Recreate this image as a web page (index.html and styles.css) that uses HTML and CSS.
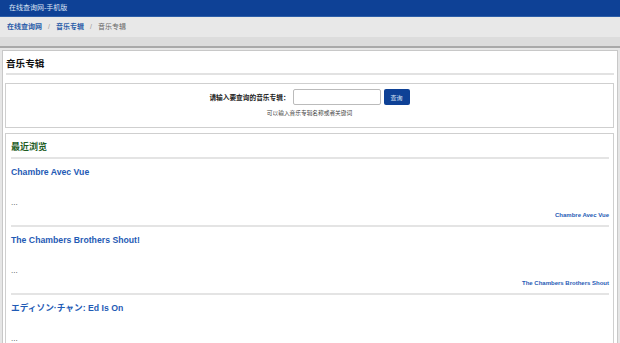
FILE: index.html
```html
<!DOCTYPE html>
<html>
  <head>
    <title>音乐专辑 - 在线查询网</title>
    <meta charset="utf-8" />
    <meta name="viewport" content="width=device-width" />
    <link rel="stylesheet" href="styles.css">
  </head>
  <body>
    <div class="top">在线查询网-手机版</div>
    <div class="crumbs">
      <a href="#">在线查询网</a><span class="sep">/</span><a href="#">音乐专辑</a><span class="sep">/</span><span class="here">音乐专辑</span>
    </div>
    <div class="bar"></div>

    <div class="main">
      <h1>音乐专辑</h1>

      <form class="box search">
        <div class="row">
          <label for="q">请输入要查询的音乐专辑：</label>
          <input id="q" type="text" />
          <button type="button">查询</button>
        </div>
        <p class="hint">可以输入音乐专辑名称或者关键词</p>
      </form>

      <div class="box recent">
        <h2>最近浏览</h2>
        <div class="item">
          <a class="title" href="#">Chambre Avec Vue</a>
          <p class="desc">...</p>
          <a class="more" href="#">Chambre Avec Vue</a>
        </div>
        <div class="item">
          <a class="title" href="#">The Chambers Brothers Shout!</a>
          <p class="desc">...</p>
          <a class="more" href="#">The Chambers Brothers Shout</a>
        </div>
        <div class="item">
          <a class="title" href="#">エディソン·チャン: Ed Is On</a>
          <p class="desc">...</p>
          <a class="more" href="#">Ed Is On</a>
        </div>
      </div>
    </div>
  </body>
</html>
```

FILE: styles.css
```css
body {
  margin: 0;
  background: #e6e6e6;
}

body,
* {
  font-family: "Liberation Sans", Arial, "Noto Sans CJK SC", sans-serif;
}

a {
  text-decoration: none;
  color: #1f5bb5;
}

.top {
  height: 16px;
  line-height: 16px;
  padding-left: 9px;
  background: #0e4196;
  border-bottom: 1px solid #2c5ea8;
  color: #dce4f3;
  font-size: 7px;
}

.crumbs {
  height: 20px;
  line-height: 20px;
  padding-left: 7px;
  background: #e8e8e8;
  font-size: 7px;
}

.crumbs a {
  font-weight: bold;
  color: #2a5ca8;
}

.crumbs .sep {
  color: #999;
  margin: 0 6px;
}

.crumbs .here {
  color: #666;
}

.bar {
  height: 9px;
  background: #dcdcdc;
  border-bottom: 2px solid #a9a9a9;
}

.main {
  margin: 2px 2px 0;
  padding: 4px 3px 20px 2px;
  background: #fff;
  border: 1px solid #c8c8c8;
}

h1 {
  margin: 0 0 0 1px;
  font-size: 9.6px;
  line-height: 18px;
  color: #111;
  border-bottom: 2px solid #e2e2e2;
}

.box {
  background: #fff;
  border: 1px solid #cfcfcf;
}

.search {
  margin: 8px 0 5px;
  padding: 5px 0 9px;
  text-align: center;
}

.search .row {
  display: flex;
  justify-content: center;
  align-items: center;
  gap: 3px;
}

.search label {
  font-size: 6.7px;
  font-weight: bold;
  color: #222;
}

.search input {
  width: 84px;
  height: 12px;
  margin: 0;
  padding: 1px;
  border: 1px solid #bbb;
  border-radius: 2px;
}

.search button {
  width: 26px;
  height: 16px;
  padding: 0;
  border: 0;
  border-radius: 2px;
  background: #0e4196;
  color: #dde6f6;
  font-size: 6px;
}

.hint {
  margin: 3px 0 0;
  font-size: 5.7px;
  line-height: 10px;
  color: #444;
}

.recent {
  padding: 6px 4px 0 5px;
}

h2 {
  margin: 0 0 3px;
  font-size: 9px;
  line-height: 14px;
  color: #1d5c1f;
}

.item {
  display: flex;
  flex-direction: column;
  border-top: 2px solid #e4e4e4;
  padding: 6px 0 4px;
}

.item .title {
  font-size: 8.7px;
  font-weight: bold;
  line-height: 14px;
}

.desc {
  margin: 18px 0 0;
  font-size: 8px;
  line-height: 12px;
  color: #444;
}

.item .more {
  align-self: flex-end;
  font-size: 6px;
  font-weight: bold;
  line-height: 12px;
}
```
